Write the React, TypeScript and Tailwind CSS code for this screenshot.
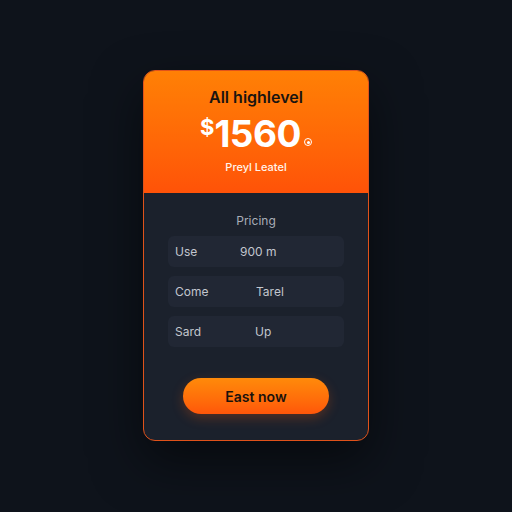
const rows = [
  { label: "Use", value: "900 m", offset: "pl-[55px]" },
  { label: "Come", value: "Tarel", offset: "pl-[71px]" },
  { label: "Sard", value: "Up", offset: "pl-[70px]" },
];

export default function App() {
  return (
    <div className="flex h-[512px] w-[512px] items-start justify-center bg-[#0e131b] pt-[70px] font-['Inter',sans-serif]">
      <div className="flex h-[371px] w-[226px] flex-col overflow-hidden rounded-[12px] border border-[#e0521a] bg-[#1b212c] shadow-[0_20px_50px_rgba(0,0,0,0.5)]">
        <div className="flex h-[122px] flex-col items-center bg-gradient-to-b from-[#ff8005] to-[#ff5208] pt-[16px]">
          <h2 className="text-[16px] font-semibold leading-5 text-[#1a1410]">All highlevel</h2>
          <div className="mt-[7px] flex items-start text-white">
            <span className="mt-[2px] text-[22px] font-bold leading-none">$</span>
            <span className="text-[37px] font-bold leading-[40px] tracking-[-0.5px]">1560</span>
            <span className="ml-[3px] mt-[24px] flex h-[8px] w-[8px] items-center justify-center rounded-full border border-white">
              <span className="h-[3px] w-[3px] rounded-full bg-white" />
            </span>
          </div>
          <p className="mt-[5px] text-[11px] font-medium text-[#fff4ec]">Preyl Leatel</p>
        </div>
        <div className="flex flex-1 flex-col items-center px-[24px] pt-[19px]">
          <p className="text-[12px] text-[#a9aeb8]">Pricing</p>
          <div className="mt-[6px] flex w-full flex-col gap-[9px]">
            {rows.map((r) => (
              <div key={r.label} className="flex h-[31px] items-center rounded-[6px] bg-[#212734] px-[7px] text-[12px] text-[#c2c6ce]">
                <span className="w-[10px]">{r.label}</span>
                <span className={r.offset}>{r.value}</span>
              </div>
            ))}
          </div>
          <button className="mt-[31px] h-[36px] w-[146px] rounded-full bg-gradient-to-b from-[#ff8a0a] to-[#ff560a] text-[14px] font-semibold text-[#1a120c] shadow-[0_4px_12px_rgba(255,90,10,0.25)]">
            East now
          </button>
        </div>
      </div>
    </div>
  );
}
